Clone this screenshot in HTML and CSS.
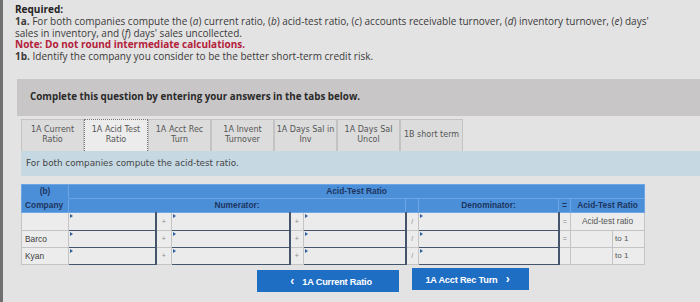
FILE: index.html
```html
<!DOCTYPE html>
<html lang="en">
<head>
    <meta charset="UTF-8">
    <title>Acid-Test Ratio</title>
    <link rel="stylesheet" href="styles.css">
</head>
<body>
<div class="page">
    <div class="required">
        <p class="req-title">Required:</p>
        <p><b>1a.</b> For both companies compute the (<i>a</i>) current ratio, (<i>b</i>) acid-test ratio, (<i>c</i>) accounts receivable turnover, (<i>d</i>) inventory turnover, (<i>e</i>) days' sales in inventory, and (<i>f</i>) days' sales uncollected.</p>
        <p class="note">Note: Do not round intermediate calculations.</p>
        <p><b>1b.</b> Identify the company you consider to be the better short-term credit risk.</p>
    </div>

    <div class="question">
        <div class="q-head">Complete this question by entering your answers in the tabs below.</div>
        <div class="q-body">
            <div class="tabs">
                <div class="tab">1A Current<br>Ratio</div>
                <div class="tab active">1A Acid Test<br>Ratio</div>
                <div class="tab">1A Acct Rec<br>Turn</div>
                <div class="tab">1A Invent<br>Turnover</div>
                <div class="tab">1A Days Sal in<br>Inv</div>
                <div class="tab">1A Days Sal<br>Uncol</div>
                <div class="tab">1B short term</div>
            </div>
            <div class="prompt">For both companies compute the acid-test ratio.</div>

            <table class="ratio">
                <colgroup>
                    <col class="c-company">
                    <col class="c-in1">
                    <col class="c-op">
                    <col class="c-in2">
                    <col class="c-op2">
                    <col class="c-in3">
                    <col class="c-op3">
                    <col class="c-den">
                    <col class="c-eq">
                    <col class="c-res">
                    <col class="c-to">
                </colgroup>
                <tr class="h1">
                    <th>(b)</th>
                    <th colspan="10">Acid-Test Ratio</th>
                </tr>
                <tr class="h2">
                    <th>Company</th>
                    <th colspan="5">Numerator:</th>
                    <th></th>
                    <th>Denominator:</th>
                    <th>=</th>
                    <th colspan="2">Acid-Test Ratio</th>
                </tr>
                <tr class="r-first">
                    <td class="name"></td>
                    <td class="in"><span class="field"></span></td>
                    <td class="op">+</td>
                    <td class="in"><span class="field"></span></td>
                    <td class="op">+</td>
                    <td class="in"><span class="field"></span></td>
                    <td class="op">/</td>
                    <td class="in"><span class="field"></span></td>
                    <td class="op">=</td>
                    <td class="label" colspan="2">Acid-test ratio</td>
                </tr>
                <tr>
                    <td class="name">Barco</td>
                    <td class="in"><span class="field"></span></td>
                    <td class="op">+</td>
                    <td class="in"><span class="field"></span></td>
                    <td class="op">+</td>
                    <td class="in"><span class="field"></span></td>
                    <td class="op">/</td>
                    <td class="in"><span class="field"></span></td>
                    <td class="op">=</td>
                    <td class="res"></td>
                    <td class="to">to 1</td>
                </tr>
                <tr>
                    <td class="name">Kyan</td>
                    <td class="in"><span class="field"></span></td>
                    <td class="op">+</td>
                    <td class="in"><span class="field"></span></td>
                    <td class="op">+</td>
                    <td class="in"><span class="field"></span></td>
                    <td class="op">/</td>
                    <td class="in"><span class="field"></span></td>
                    <td class="op"></td>
                    <td class="res"></td>
                    <td class="to">to 1</td>
                </tr>
            </table>

            <div class="nav">
                <button class="nav-btn prev"><span class="chev">&lsaquo;</span> 1A Current Ratio</button>
                <button class="nav-btn next">1A Acct Rec Turn <span class="chev">&rsaquo;</span></button>
            </div>
        </div>
    </div>
</div>
</body>
</html>
```

FILE: styles.css
```css
body {
    margin: 0;
    background-color: #e4e3e3;
    font-family: 'Open Sans', Lato, sans-serif;
    color: #3a3a3a;
}

.page {
    height: 302px;
    border-left: 3px solid #707070;
    box-sizing: border-box;
    padding-top: 4px;
    overflow: hidden;
}

/* instructions */
.required {
    padding-left: 12px;
    max-width: 652px;
    font-size: 10px;
    line-height: 11.8px;
}

.required p {
    margin: 0;
}

.required i {
    font-style: italic;
}

.req-title {
    font-weight: bold;
    color: #222;
}

.note {
    color: #b3213b;
    font-weight: bold;
}

/* question box */
.question {
    margin: 16px 0 0 14px;
}

.q-head {
    background-color: #c8c6c7;
    height: 37px;
    line-height: 36px;
    padding-left: 13px;
    font-family: 'Open Sans', sans-serif;
    font-weight: bold;
    font-size: 9.8px;
    color: #2a2a2a;
}

.q-body {
    padding: 3px 0 0 4px;
}

.tabs {
    display: flex;
    height: 32px;
}

.tab {
    width: 63px;
    box-sizing: border-box;
    border: 1px solid #c3c3c3;
    border-bottom: none;
    background-color: #dcdcdc;
    display: flex;
    align-items: center;
    justify-content: center;
    text-align: center;
    font-family: 'DejaVu Sans', sans-serif;
    font-size: 8px;
    line-height: 10.5px;
    color: #555;
}

.tab.active {
    background-color: #ececec;
    border: 1px dotted #777;
    border-bottom: none;
    width: 64px;
}

.prompt {
    background-color: #c6d9e3;
    height: 25px;
    line-height: 25px;
    padding-left: 5px;
    font-family: 'DejaVu Sans', sans-serif;
    font-size: 8.8px;
    color: #444;
}

/* ratio table */
.ratio {
    margin-top: 8px;
    border-collapse: collapse;
    table-layout: fixed;
    width: 623px;
    font-family: 'Liberation Sans', Arial, sans-serif;
    font-size: 8.4px;
}

.c-company { width: 47px; }
.c-in1 { width: 87px; }
.c-op { width: 16px; }
.c-in2 { width: 118px; }
.c-op2 { width: 14px; }
.c-in3 { width: 102px; }
.c-op3 { width: 13px; }
.c-den { width: 140px; }
.c-eq { width: 12px; }
.c-res { width: 42px; }
.c-to { width: 32px; }

.ratio th {
    background-color: #4c8fd9;
    color: #1c3560;
    font-weight: bold;
    border: 1px solid #6ea5e4;
    padding: 0;
    height: 13px;
}

.ratio .h1 th:first-child {
    border-bottom-color: #4c8fd9;
}

.ratio .h2 th:first-child {
    text-align: left;
    padding-left: 3px;
    border-top-color: #4c8fd9;
}

.ratio td {
    background-color: #ececec;
    border: 1px solid #c4c4c4;
    padding: 0;
    height: 16px;
    color: #444;
}

.ratio .r-first td {
    height: 17px;
}

.ratio td.name {
    padding-left: 3px;
    color: #3d3d3d;
}

.ratio td.in {
    position: relative;
    border: 1px solid #44546a;
    border-width: 1px 2px 1px 1px;
}

.field {
    display: block;
    height: 100%;
    background-color: #ebebeb;
}

.ratio td.in::before {
    content: "";
    position: absolute;
    left: 1px;
    top: 1px;
    border-left: 3px solid #2e5f9e;
    border-top: 2px solid transparent;
    border-bottom: 2px solid transparent;
}

.ratio td.op {
    text-align: center;
    color: #888;
    font-size: 7px;
}

.ratio td.label {
    text-align: center;
    color: #555;
}

.ratio td.to {
    padding-left: 2px;
    color: #555;
    font-size: 8px;
}

/* navigation */
.nav {
    display: flex;
    gap: 13px;
    margin: 5px 0 0 236px;
}

.nav-btn {
    height: 22px;
    border: none;
    background-color: #1e6ec3;
    color: #fff;
    font-family: 'Liberation Sans', Arial, sans-serif;
    font-weight: bold;
    font-size: 9.2px;
    padding: 0;
    letter-spacing: -0.2px;
}

.nav-btn.prev {
    width: 142px;
}

.nav-btn.next {
    width: 117px;
    margin-top: -2px;
}

.chev {
    font-size: 12px;
    margin: 0 6px;
}
```
